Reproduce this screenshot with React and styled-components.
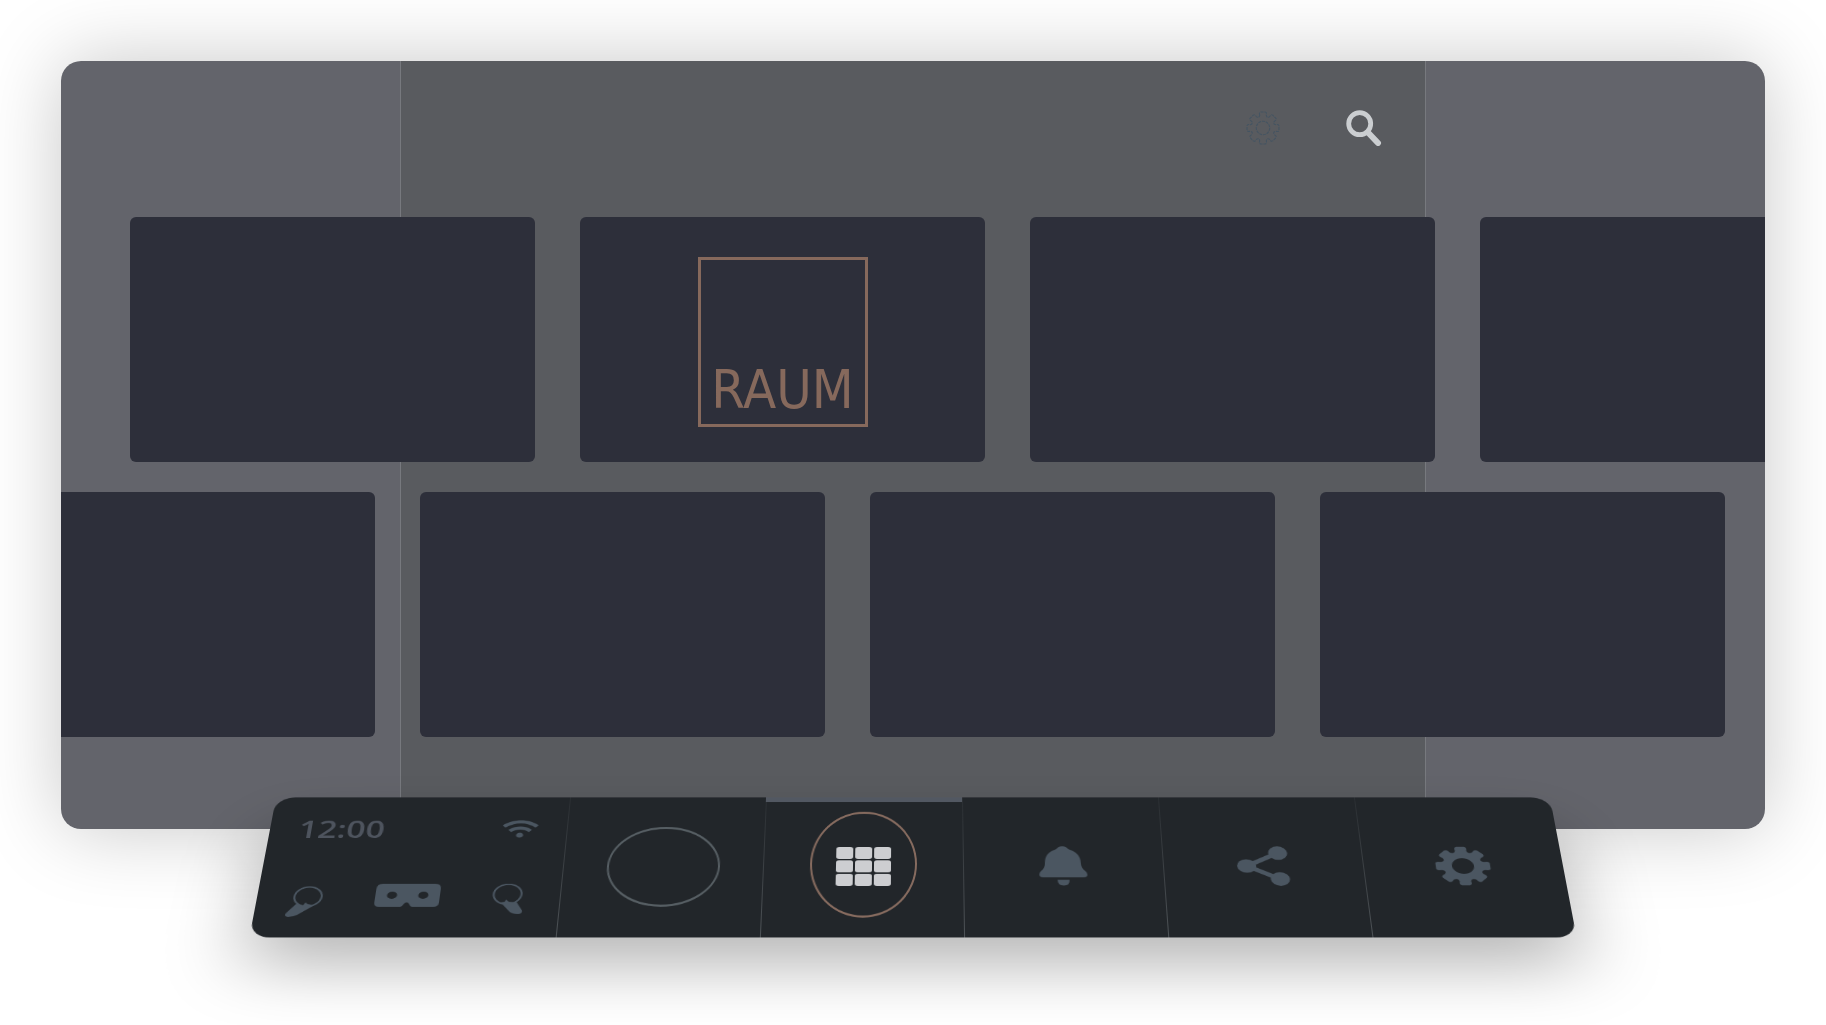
import React from 'react';
import styled, { createGlobalStyle } from 'styled-components';
import { FaWifi } from 'react-icons/fa';

const GlobalStyle = createGlobalStyle`
  * {
    box-sizing: border-box;
  }

  body {
    margin: 0;
    background-color: #fff;
    font-family: 'Open Sans', 'Noto Sans', sans-serif;
  }
`;

// one tooth every 45 degrees, with a scooped valley between the teeth
const gearPath = () => {
  const at = (r, deg) => {
    const a = ((deg - 90) * Math.PI) / 180;
    return `${(r * Math.cos(a)).toFixed(2)} ${(r * Math.sin(a)).toFixed(2)}`;
  };
  let d = '';
  for (let i = 0; i < 8; i++) {
    const c = i * 45;
    d += `${i === 0 ? 'M' : 'L'}${at(22, c - 15)} L${at(25, c - 14)} Q${at(27.5, c - 13)} ${at(27.5, c - 8)} `;
    d += `L${at(27.5, c + 8)} Q${at(27.5, c + 13)} ${at(25, c + 14)} L${at(22, c + 15)} `;
    d += `Q${at(18, c + 22.5)} ${at(22, c + 30)} `;
  }
  return `${d}Z`;
};

const GEAR = gearPath();

const GearIcon = () => (
  <svg width="56" height="56" viewBox="-28 -28 56 56" aria-hidden="true">
    <path
      fill="currentColor"
      fillRule="evenodd"
      d={`${GEAR} M-11 0a11 11 0 1 0 22 0a11 11 0 1 0 -22 0Z`}
    />
  </svg>
);

const GearOutlineIcon = () => (
  <svg width="34" height="34" viewBox="-29 -29 58 58" aria-hidden="true">
    <g fill="none" stroke="currentColor" strokeWidth="1.8" strokeDasharray="5 1.5">
      <path d={GEAR} />
      <circle r="11.5" />
    </g>
  </svg>
);

const SearchIcon = () => (
  <svg width="36" height="36" viewBox="0 0 36 36" fill="none" stroke="currentColor" aria-hidden="true">
    <circle cx="13.7" cy="13.7" r="11" strokeWidth="4.8" />
    <path d="M22 22.5L32 33" strokeWidth="6" strokeLinecap="round" />
  </svg>
);

const AppsIcon = () => (
  <svg width="55" height="55" viewBox="0 0 55 55" fill="currentColor" aria-hidden="true">
    {[0, 19, 38].map((y) =>
      [0, 19, 38].map((x) => <rect key={`${x}-${y}`} x={x} y={y} width="17" height="17" rx="3" />)
    )}
  </svg>
);

const BellIcon = () => (
  <svg width="48" height="56" viewBox="0 0 48 56" fill="currentColor" aria-hidden="true">
    <path d="M18 4Q20 0 24 0Q28 0 30 4Q42 9 42 24Q42 31 46 35Q48 37 48 40Q48 44 44 44H4Q0 44 0 40Q0 37 2 35Q6 31 6 24Q6 9 18 4Z" />
    <path d="M18 47.500H30Q30 55.500 24 55.500Q18 55.500 18 47.500Z" />
  </svg>
);

const ShareIcon = () => (
  <svg width="52" height="56" viewBox="0 0 52 56" fill="currentColor" aria-hidden="true">
    <path d="M10 28L42 9.5M10 28L42 46.5" stroke="currentColor" strokeWidth="5.500" />
    <circle cx="9.7" cy="28" r="9.6" />
    <circle cx="42" cy="9.7" r="9.6" />
    <circle cx="42" cy="46.3" r="9.6" />
  </svg>
);

const HeadsetIcon = () => (
  <svg width="64" height="32" viewBox="0 0 64 32" aria-hidden="true">
    <path
      fill="currentColor"
      fillRule="evenodd"
      d="M6 0H58Q64 0 64 7V26Q64 32 59 32H38Q36.500 32 35.500 30Q34 26 32 26Q30 26 28.500 30Q27.500 32 26 32H5Q0 32 0 26V7Q0 0 6 0ZM11.500 16a5 5 0 1 0 10 0a5 5 0 1 0 -10 0ZM42.500 16a5 5 0 1 0 10 0a5 5 0 1 0 -10 0Z"
    />
  </svg>
);

const LeftControllerIcon = () => (
  <svg width="34" height="46" viewBox="2 0 34 46" aria-hidden="true">
    <circle cx="21.500" cy="18" r="13.500" fill="none" stroke="currentColor" strokeWidth="2" />
    <path fill="currentColor" d="M11 28L18 30L20 26L22 28L29 30L14 43Q10 46 5 46Q0 45 3 40Z" />
  </svg>
);

const RightControllerIcon = () => (
  <svg width="32" height="42" viewBox="0 0 32 42" aria-hidden="true">
    <circle cx="15" cy="14.500" r="13.800" fill="none" stroke="currentColor" strokeWidth="2" />
    <path fill="currentColor" d="M9 26L13 25L14 22L17 25L25 26L31 37Q32 42 27 42Q22 42 19 39Z" />
  </svg>
);

const tiles = {
  first: ['empty-1', 'raum', 'empty-2', 'empty-3'],
  second: ['empty-4', 'empty-5', 'empty-6', 'empty-7'],
};

const App = () => {
  return (
    <Page>
      <GlobalStyle />
      <Screen>
        <Wall $column={1} />
        <Wall $column={2} $center />
        <Wall $column={3} />
        <Toolbar>
          <ToolButton aria-label="Options">
            <GearOutlineIcon />
          </ToolButton>
          <ToolButton aria-label="Search" $bright>
            <SearchIcon />
          </ToolButton>
        </Toolbar>
        <Shelf>
          {tiles.first.map((tile) => (
            <Tile key={tile}>{tile === 'raum' && <Logo>RAUM</Logo>}</Tile>
          ))}
        </Shelf>
        <Shelf $fromEnd>
          {tiles.second.map((tile) => (
            <Tile key={tile} />
          ))}
        </Shelf>
      </Screen>

      <Dock>
        <Status>
          <StatusRow>
            <Clock>12:00</Clock>
            <FaWifi size={36} />
          </StatusRow>
          <StatusRow $devices>
            <LeftControllerIcon />
            <HeadsetIcon />
            <RightControllerIcon />
          </StatusRow>
        </Status>
        <DockButton aria-label="Profile">
          <Avatar />
        </DockButton>
        <DockButton aria-label="Apps" $active>
          <ActiveRing>
            <AppsIcon />
          </ActiveRing>
        </DockButton>
        <DockButton aria-label="Notifications">
          <BellIcon />
        </DockButton>
        <DockButton aria-label="Share">
          <ShareIcon />
        </DockButton>
        <DockButton aria-label="Settings">
          <GearIcon />
        </DockButton>
      </Dock>
    </Page>
  );
};

export default App;

const Page = styled.main`
  display: flex;
  flex-direction: column;
  align-items: center;
  min-height: 100vh;
  padding: 61px 61px 40px;
  overflow: hidden;
`;

const Screen = styled.section`
  display: grid;
  grid-template-columns: 10fr 30fr 10fr;
  grid-template-columns: 1fr 3.02fr 1fr;
  grid-template-rows: 126px auto auto 62px;
  row-gap: 30px;
  width: 100%;
  border-radius: 20px;
  overflow: hidden;
  box-shadow: 0 0 80px rgba(0, 0, 0, 0.22);
`;

const Wall = styled.div`
  grid-row: 1 / -1;
  grid-column: ${(props) => props.$column};
  background-color: ${(props) => (props.$center ? '#595b5f' : '#63646b')};
  border: solid #77797e;
  border-width: ${(props) => (props.$center ? '0 1px' : '0')};
`;

const Toolbar = styled.header`
  grid-row: 1;
  grid-column: 2;
  display: flex;
  justify-content: flex-end;
  align-items: center;
  gap: 66px;
  padding: 8px 44px 0 0;
`;

const ToolButton = styled.button`
  display: flex;
  padding: 0;
  border: none;
  background: none;
  color: ${(props) => (props.$bright ? '#cbced1' : '#445462')};
  cursor: pointer;
`;

const Shelf = styled.div`
  grid-row: ${(props) => (props.$fromEnd ? 3 : 2)};
  grid-column: 1 / -1;
  display: flex;
  justify-content: ${(props) => (props.$fromEnd ? 'flex-end' : 'flex-start')};
  gap: 45px;
  min-width: 0;
  padding: ${(props) => (props.$fromEnd ? '0 40px 0 0' : '0 0 0 69px')};
  overflow: hidden;
`;

const Tile = styled.article`
  flex: none;
  display: flex;
  justify-content: center;
  align-items: center;
  width: 405px;
  height: 245px;
  padding-top: 4px;
  border-radius: 6px;
  background-color: #2d2f3a;
`;

const Logo = styled.div`
  display: flex;
  justify-content: center;
  align-items: flex-end;
  width: 170px;
  height: 170px;
  padding-bottom: 6px;
  border: 3px solid #86695c;
  color: #86695c;
  font-family: 'DejaVu Sans Condensed', 'DejaVu Sans', sans-serif;
  font-size: 54px;
  line-height: 56px;
`;

const Dock = styled.nav`
  display: grid;
  grid-template-columns: 3fr repeat(5, 2fr);
  width: 76.3%;
  height: 198px;
  margin-top: -62px;
  border-radius: 20px;
  overflow: hidden;
  background-color: #22262a;
  color: #4b5661;
  box-shadow: 0 40px 80px rgba(0, 0, 0, 0.28);
  transform: perspective(3400px) rotateX(45deg);
`;

const Status = styled.div`
  display: flex;
  flex-direction: column;
  justify-content: space-between;
  padding: 24px 29px 28px 29px;
`;

const StatusRow = styled.div`
  display: flex;
  justify-content: space-between;
  align-items: ${(props) => (props.$devices ? 'flex-start' : 'center')};
  padding: ${(props) => (props.$devices ? '0 6px 0 2px' : '0')};
`;

const Clock = styled.time`
  color: #4e545e;
  font-size: 34px;
  font-weight: 600;
  line-height: 44px;
`;

const DockButton = styled.button`
  display: flex;
  justify-content: center;
  align-items: center;
  padding: 0;
  border: none;
  background: linear-gradient(to bottom, #2a2e32, #4e5357) left / 1px 100% no-repeat;
  box-shadow: ${(props) => (props.$active ? 'inset 0 7px #525862' : 'none')};
  color: inherit;
  cursor: pointer;
`;

const Avatar = styled.span`
  width: 113px;
  height: 113px;
  border: solid #565e63;
  border-width: 3px 2px;
  border-radius: 50%;
`;

/* taller than wide, the tilt of the dock turns it into a circle */
const ActiveRing = styled.span`
  display: flex;
  justify-content: center;
  align-items: center;
  width: 107px;
  height: 150px;
  margin-bottom: 6px;
  padding-top: 6px;
  border: solid #866b5f;
  border-width: 3px 2px;
  border-radius: 50%;
  color: #cdced1;
`;
